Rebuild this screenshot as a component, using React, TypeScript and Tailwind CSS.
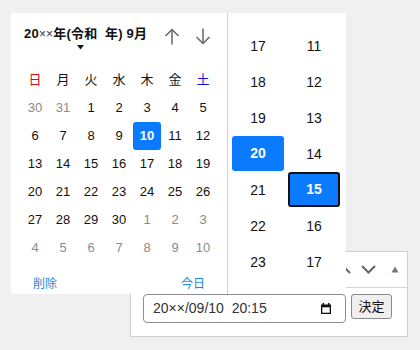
import React from "react";

const FONT = { fontFamily: '"Liberation Sans", "Noto Sans CJK JP", sans-serif' };

type Day = { d: number; muted?: boolean; sel?: boolean };

const weeks: Day[][] = [
  [{ d: 30, muted: true }, { d: 31, muted: true }, { d: 1 }, { d: 2 }, { d: 3 }, { d: 4 }, { d: 5 }],
  [{ d: 6 }, { d: 7 }, { d: 8 }, { d: 9 }, { d: 10, sel: true }, { d: 11 }, { d: 12 }],
  [{ d: 13 }, { d: 14 }, { d: 15 }, { d: 16 }, { d: 17 }, { d: 18 }, { d: 19 }],
  [{ d: 20 }, { d: 21 }, { d: 22 }, { d: 23 }, { d: 24 }, { d: 25 }, { d: 26 }],
  [{ d: 27 }, { d: 28 }, { d: 29 }, { d: 30 }, { d: 1, muted: true }, { d: 2, muted: true }, { d: 3, muted: true }],
  [4, 5, 6, 7, 8, 9, 10].map((d) => ({ d, muted: true })),
];

const weekdays = [
  { t: "日", c: "text-[#e8000b]" },
  { t: "月", c: "text-[#111]" },
  { t: "火", c: "text-[#111]" },
  { t: "水", c: "text-[#111]" },
  { t: "木", c: "text-[#111]" },
  { t: "金", c: "text-[#111]" },
  { t: "土", c: "text-[#1010e0]" },
];

const hours = [17, 18, 19, 20, 21, 22, 23];
const minutes = [11, 12, 13, 14, 15, 16, 17];

function Arrow({ up }: { up?: boolean }) {
  return (
    <svg width="16" height="17" viewBox="0 0 16 17" fill="none" stroke="#666" strokeWidth="1.5">
      {up ? (
        <>
          <path d="M8 1.5V16.5" />
          <path d="M1.5 8L8 1.5L14.5 8" />
        </>
      ) : (
        <>
          <path d="M8 0.5V15.5" />
          <path d="M1.5 9L8 15.5L14.5 9" />
        </>
      )}
    </svg>
  );
}

export default function App() {
  return (
    <div className="relative w-[420px] h-[350px] bg-[#f0f0f0] overflow-hidden" style={FONT}>
      {/* Underlying panel */}
      <div className="pl-[130px] pt-[251px]">
        <div className="w-[278px] h-[86px] bg-white border border-[#cfcfcf] flex flex-col">
          <div className="h-[36px] border-b border-[#d4d4d4] flex items-center justify-end pr-[8px]">
            <svg width="15" height="9" viewBox="0 0 15 9" fill="none" stroke="#666" strokeWidth="2" className="mr-[10px]">
              <path d="M1 8L7.5 1.5L14 8" />
            </svg>
            <svg width="15" height="9" viewBox="0 0 15 9" fill="none" stroke="#666" strokeWidth="2" className="mr-[15px]">
              <path d="M1 1L7.5 7.5L14 1" />
            </svg>
            <svg width="8" height="7" viewBox="0 0 8 7" className="mb-[1px]">
              <path d="M4 0.5L7.5 6.5H0.5Z" fill="#777" />
            </svg>
          </div>
          <div className="flex items-start pl-[12px] pt-[6px] gap-[5px]">
            <div className="w-[203px] h-[29px] border border-[#8f8f8f] rounded-[4px] flex items-center pl-[9px] pr-[14px] text-[14px] text-[#333]">
              <span className="flex-1 whitespace-pre">20××/09/10  20:15</span>
              <svg width="10" height="11" viewBox="0 0 10 11">
                <rect x="0" y="1.5" width="10" height="9.5" fill="#111" />
                <rect x="1.3" y="4.3" width="7.4" height="5.4" fill="#fff" />
                <rect x="1.5" y="0" width="1.6" height="2" fill="#111" />
                <rect x="6.9" y="0" width="1.6" height="2" fill="#111" />
              </svg>
            </div>
            <button className="w-[41px] h-[25px] bg-[#efefef] border border-[#8a8a8a] rounded-[3px] text-[13px] text-[#111] leading-none">
              決定
            </button>
          </div>
        </div>
      </div>

      {/* Popup */}
      <div className="absolute left-[11px] top-[13px] w-[335px] h-[281px] bg-white flex">
        {/* Calendar */}
        <div className="w-[217px] border-r border-[#d0d0d0] px-[10px] flex flex-col">
          <div className="h-[53px] flex items-start">
            <div className="flex flex-col pl-[3px] pt-[13px]">
              <div className="text-[13px] font-bold leading-[16px] text-[#111] whitespace-pre tracking-[0.2px]">
                20<span className="font-normal text-[12px] text-[#333]">××</span>年(令和  年) 9月
              </div>
              <svg width="7" height="5" viewBox="0 0 7 5" className="ml-[53px] mt-[3px]">
                <path d="M0 0H7L3.5 4.5Z" fill="#111" />
              </svg>
            </div>
            <div className="ml-auto mr-[6px] mt-[15px] flex gap-[15px]">
              <Arrow up />
              <Arrow />
            </div>
          </div>
          <div className="grid grid-cols-7 text-[13px]">
            {weekdays.map((w) => (
              <div key={w.t} className={`h-[28px] flex items-center justify-center ${w.c}`}>
                {w.t}
              </div>
            ))}
            {weeks.flat().map((day, i) => (
              <div key={i} className="h-[28px] flex items-center justify-center">
                {day.sel ? (
                  <div className="w-[28px] h-[28px] rounded-[3px] bg-[#0a7bff] text-white font-bold flex items-center justify-center">
                    {day.d}
                  </div>
                ) : (
                  <span className={day.muted ? "text-[#8a8a8a]" : "text-[#111]"}>{day.d}</span>
                )}
              </div>
            ))}
          </div>
          <div className="flex justify-between px-[12px] pt-[14px] text-[12px] leading-[16px] text-[#1f86d8]">
            <span>削除</span>
            <span>今日</span>
          </div>
        </div>

        {/* Time columns */}
        <div className="flex pl-[4px] pt-[15px] gap-[4px] text-[14px] text-[#111]">
          <div className="w-[52px] flex flex-col">
            {hours.map((h) =>
              h === 20 ? (
                <div key={h} className="h-[36px] flex items-start">
                  <div className="w-[52px] h-[35px] rounded-[3px] bg-[#0a7bff] text-white font-bold flex items-center justify-center">
                    {h}
                  </div>
                </div>
              ) : (
                <div key={h} className="h-[36px] flex items-center justify-center">
                  {h}
                </div>
              )
            )}
          </div>
          <div className="w-[52px] flex flex-col">
            {minutes.map((m) =>
              m === 15 ? (
                <div key={m} className="h-[36px] flex items-start">
                  <div className="w-[52px] h-[35px] rounded-[3px] bg-[#0a7bff] border-2 border-[#111] text-white font-bold flex items-center justify-center">
                    {m}
                  </div>
                </div>
              ) : (
                <div key={m} className="h-[36px] flex items-center justify-center">
                  {m}
                </div>
              )
            )}
          </div>
        </div>
      </div>
    </div>
  );
}
